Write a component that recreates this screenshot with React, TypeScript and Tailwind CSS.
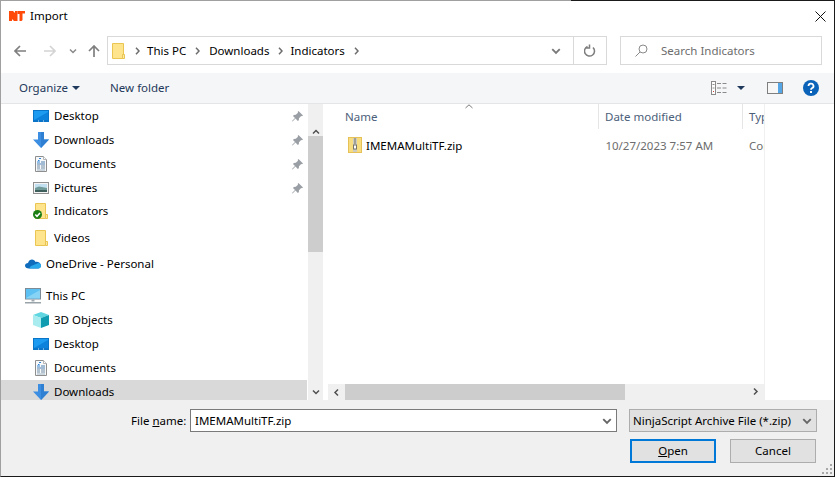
import type { ReactNode } from "react";

function Logo() {
  return (
    <svg width="16" height="10" viewBox="0 0 16 10" fill="#ff4a0a">
      <path d="M0 0h4l2 2V0h2.500v10H5L3 8v2H0z" />
      <path d="M8.500 0H16v2.500h-2.500V9l-1 1h-2V3H8.500z" />
    </svg>
  );
}

function Chevron({ color = "#7a7a7a", size = 8 }: { color?: string; size?: number }) {
  return (
    <svg width={size} height={size} viewBox="0 0 8 8" fill="none" stroke={color} strokeWidth="1.5">
      <path d="M1 2.500l3 3 3-3" />
    </svg>
  );
}

function Crumb() {
  return (
    <svg width="5" height="8" viewBox="0 0 5 8" fill="none" stroke="#6e6e6e" strokeWidth="1.500">
      <path d="M1 .8l3 3.200-3 3.200" />
    </svg>
  );
}

function Arrow({ color, flip }: { color: string; flip?: boolean }) {
  return (
    <svg width="12" height="12" viewBox="0 0 12 12" fill="none" stroke={color} strokeWidth="1.700" className={flip ? "rotate-180" : ""}>
      <path d="M12 6H1.500M6 1L1 6l5 5" />
    </svg>
  );
}

function FolderIcon({ check }: { check?: boolean }) {
  return (
    <svg width="16" height="16" viewBox="0 0 16 16">
      <path d="M2.500 0.500h10v15h-10z" fill="#fde48d" stroke="#eac552" />
      <path d="M12.500 11.500h2v4h-2z" fill="#fbe9a8" stroke="#eac552" />
      {check && (
        <g>
          <circle cx="4.500" cy="11.500" r="4.500" fill="#1b7f16" />
          <path d="M2.300 11.500l1.700 1.800 3-3.300" fill="none" stroke="#fff" strokeWidth="1.500" />
        </g>
      )}
    </svg>
  );
}

function DesktopIcon() {
  return (
    <svg width="16" height="16" viewBox="0 0 16 16">
      <rect x="0" y="2" width="16" height="12" fill="#0a74c8" />
      <rect x="1" y="3" width="14" height="9" fill="#1d9bf0" />
      <path d="M1 12L15 4v8z" fill="#0c82dc" />
      <path d="M5 13h1M10 13h1" stroke="#d5ecfb" />
    </svg>
  );
}

function DownloadIcon() {
  return (
    <svg width="16" height="16" viewBox="0 0 16 16">
      <path d="M5 0h6v7.500h5L8 16 0 7.500h5z" fill="#3b8ee2" />
      <path d="M8 0h3v7.500h5L8 16z" fill="#2f7fd3" />
    </svg>
  );
}

function DocumentIcon() {
  return (
    <svg width="16" height="16" viewBox="0 0 16 16">
      <path d="M2.500.5h8l3 3v12h-11z" fill="#f7f8f9" stroke="#8e8e8e" />
      <path d="M10.500.5v3h3" fill="#fff" stroke="#b5b5b5" />
      <path d="M6 2.500h2M5 4.500h1.500M4 6h3" stroke="#2f86d6" />
      <path d="M8 6h4M4 8h8" stroke="#4a7fae" />
      <path d="M4 10h3M8 10h4M4 12h3M8 12h4" stroke="#6f8ba3" />
      <path d="M4 14h8" stroke="#9fb2c2" />
    </svg>
  );
}

function PicturesIcon() {
  return (
    <svg width="16" height="16" viewBox="0 0 16 16">
      <rect x=".5" y="2.500" width="15" height="11" fill="#f4f4f4" stroke="#8f8f8f" />
      <rect x="2" y="4" width="12" height="4" fill="#c2dff0" />
      <path d="M2 8l4-1.500L14 8v4H2z" fill="#6f9a98" />
      <rect x="2" y="10" width="12" height="2" fill="#3f5f5c" />
    </svg>
  );
}

function CloudIcon() {
  return (
    <svg width="16" height="16" viewBox="0 0 16 16">
      <path d="M4 12.500C1.500 12.500 0 11.300 0 9.700 0 8 1.500 7 3 7c.5-2.500 2.500-3.500 4-3.500S10 4.500 10.500 6c2-.6 5.500.5 5.500 3.700 0 1.600-1.200 2.800-3 2.800z" fill="#0f6cbd" />
      <path d="M4 12.500h9c1.800 0 3-1.200 3-2.800 0-1.500-1-2.500-2.500-2.800L6 10z" fill="#28a8ea" />
    </svg>
  );
}

function MonitorIcon() {
  return (
    <svg width="16" height="16" viewBox="0 0 16 16">
      <rect x=".5" y="0.500" width="15" height="10.500" fill="#5cc0f2" stroke="#7d8b96" />
      <path d="M1 10L15 2v8.500H1z" fill="#86d3f6" />
      <rect x="6.500" y="11.500" width="3" height="2" fill="#a0a9b0" />
      <rect x="0" y="14" width="16" height="1.500" fill="#9aa3aa" />
    </svg>
  );
}

function CubeIcon() {
  return (
    <svg width="16" height="16" viewBox="0 0 16 16">
      <path d="M8 0l8 3-8 3-8-3z" fill="#5fd6e0" />
      <path d="M0 3l8 3v10L0 13z" fill="#a8ecef" />
      <path d="M16 3L8 6v10l8-3z" fill="#0f9bb0" />
    </svg>
  );
}

function Pin() {
  return (
    <svg width="11" height="11" viewBox="0 0 11 11" fill="#9a9fa5">
      <path d="M6.500 0L11 4.500l-1 .8-.8-.3L7 7.200l-.2 2L5.800 10 3.500 7.500 0.500 10.500 0 10l3-3L1 5l.8-1 2-.2L6 1.800l-.3-.8z" />
    </svg>
  );
}

function NavRow({ icon, label, pin, className, indent = "pl-8" }: { icon: ReactNode; label: string; pin?: boolean; className: string; indent?: string }) {
  return (
    <div className={`flex shrink-0 items-center pr-1 text-black ${indent} ${className}`}>
      <span className="mr-[5px] flex h-4 w-4 shrink-0">{icon}</span>
      <span className="flex-1">{label}</span>
      {pin && <Pin />}
    </div>
  );
}

function Sidebar() {
  return (
    <div className="flex w-[306px] shrink-0 flex-col overflow-hidden">
      <NavRow icon={<DesktopIcon />} label="Desktop" pin className="h-6" />
      <NavRow icon={<DownloadIcon />} label="Downloads" pin className="h-6" />
      <NavRow icon={<DocumentIcon />} label="Documents" pin className="h-6" />
      <NavRow icon={<PicturesIcon />} label="Pictures" pin className="h-6" />
      <NavRow icon={<FolderIcon check />} label="Indicators" className="h-[22px]" />
      <NavRow icon={<FolderIcon />} label="Videos" className="mt-1 h-6" />
      <NavRow icon={<CloudIcon />} label="OneDrive - Personal" indent="pl-6" className="mt-0.5 h-6" />
      <NavRow icon={<MonitorIcon />} label="This PC" indent="pl-6" className="mt-2 h-6" />
      <NavRow icon={<CubeIcon />} label="3D Objects" className="h-6" />
      <NavRow icon={<DesktopIcon />} label="Desktop" className="h-6" />
      <NavRow icon={<DocumentIcon />} label="Documents" className="h-6" />
      <NavRow icon={<DownloadIcon />} label="Downloads" className="h-6 bg-[#d9d9d9]" />
    </div>
  );
}

function VScroll() {
  return (
    <div className="ml-px flex w-[15px] shrink-0 flex-col bg-[#f0f0f0]">
      <div className="flex h-8 shrink-0 justify-center pt-2">
        <span className="rotate-180"><Chevron color="#505050" /></span>
      </div>
      <div className="h-[116px] bg-[#cdcdcd]" />
      <div className="flex flex-1 items-end justify-center pb-1">
        <Chevron color="#505050" />
      </div>
    </div>
  );
}

function HScroll() {
  return (
    <div className="ml-0.5 flex h-4 shrink-0 items-center bg-[#f0f0f0]">
      <span className="flex w-[17px] justify-center rotate-90"><Chevron color="#505050" /></span>
      <div className="h-4 w-[280px] bg-[#cdcdcd]" />
      <span className="ml-auto flex w-[17px] justify-center -rotate-90"><Chevron color="#505050" /></span>
    </div>
  );
}

function FileList() {
  return (
    <div className="ml-[3px] flex w-[439px] shrink-0 flex-col border-r border-[#f0f0f0]">
      <div className="flex h-[25px] shrink-0 text-[#4c607a]">
        <div className="relative flex w-[273px] items-center border-r border-[#e5e5e5] pl-[19px]">
          Name
          <svg width="8" height="5" viewBox="0 0 8 5" fill="none" stroke="#7a7a7a" className="absolute left-[139px] top-0">
            <path d="M.5 4L4 .8 7.500 4" />
          </svg>
        </div>
        <div className="flex w-[144px] items-center border-r border-[#e5e5e5] pl-1.5">Date modified</div>
        <div className="flex w-[21px] items-center overflow-hidden pl-1.5">Type</div>
      </div>
      <div className="mt-1 flex h-6 shrink-0 items-center">
        <span className="ml-[22px] mr-1 flex h-4 w-3.5">
          <svg width="14" height="16" viewBox="0 0 14 16">
            <rect x=".5" y=".5" width="13" height="15" fill="#f8dc80" stroke="#e5c158" />
            <rect x="5" y="1" width="4" height="14" fill="#cfcdbf" />
            <path d="M6 2h2M6 4h2M6 6h2" stroke="#77756c" />
            <rect x="5.500" y="8" width="3" height="4" fill="#fff" stroke="#77756c" />
          </svg>
        </span>
        <span className="w-[240px] pt-px text-black">IMEMAMultiTF.zip</span>
        <span className="w-[144px] pt-px text-[#6d6d6d]">10/27/2023 7:57 AM</span>
        <span className="w-[15px] overflow-hidden pt-px text-[#6d6d6d]">Compressed</span>
      </div>
      <div className="flex-1" />
      <HScroll />
    </div>
  );
}

function Grip() {
  return (
    <svg width="11" height="11" viewBox="0 0 11 11" fill="#a8a8a8" className="absolute bottom-px right-px">
      <rect x="8" y="0" width="2" height="2" />
      <rect x="4" y="4" width="2" height="2" />
      <rect x="8" y="4" width="2" height="2" />
      <rect x="0" y="8" width="2" height="2" />
      <rect x="4" y="8" width="2" height="2" />
      <rect x="8" y="8" width="2" height="2" />
    </svg>
  );
}

export default function App() {
  return (
    <div className="flex h-[477px] w-[835px] flex-col overflow-hidden border-b border-l border-r border-b-[#1a1a1a] border-l-[#a0a0a0] border-r-[#1a1a1a] bg-white font-['Noto_Sans','Open_Sans',sans-serif] text-[11.5px] leading-4">
      <div className="flex h-px shrink-0">
        <div className="w-[570px] bg-[#a0a0a0]" />
        <div className="flex-1 bg-[#1a1a1a]" />
      </div>

      <div className="flex h-[30px] shrink-0 items-center pl-2 text-black">
        <Logo />
        <span className="ml-[5px]">Import</span>
        <svg width="11" height="11" viewBox="0 0 11 11" fill="none" stroke="#111" className="ml-auto mr-2">
          <path d="M.5.5l10 10M10.500.5l-10 10" />
        </svg>
      </div>

      <div className="mt-[5px] flex h-[29px] shrink-0 items-center">
        <div className="ml-[13px]"><Arrow color="#7f7f7f" /></div>
        <div className="ml-[18px]"><Arrow color="#d4d4d4" flip /></div>
        <div className="ml-[13px]"><Chevron color="#8a8a8a" size={8} /></div>
        <div className="ml-[11px] rotate-90"><Arrow color="#7f7f7f" /></div>
        <div className="ml-[7px] flex h-[29px] w-[500px] items-center border border-[#d9d9d9]">
          <span className="ml-1 flex h-4 w-4">
            <svg width="13" height="16" viewBox="0 0 13 16">
              <path d="M.5.5h11v15H.5z" fill="#fde48d" stroke="#eac552" />
              <path d="M10.500 11.500h2v4h-2z" fill="#fbe9a8" stroke="#eac552" />
            </svg>
          </span>
          <span className="ml-[7px]"><Crumb /></span>
          <span className="ml-[7px] text-black">This PC</span>
          <span className="ml-[9px]"><Crumb /></span>
          <span className="ml-[9px] text-black">Downloads</span>
          <span className="ml-[9px]"><Crumb /></span>
          <span className="ml-[7px] text-black">Indicators</span>
          <span className="ml-[9px]"><Crumb /></span>
          <span className="ml-auto flex w-[34px] justify-center"><Chevron color="#7a7a7a" size={10} /></span>
          <div className="flex h-full w-[33px] items-center justify-center border-l border-[#d9d9d9]">
            <svg width="12" height="13" viewBox="0 0 12 13" fill="none" stroke="#7d7d7d" strokeWidth="1.500">
              <path d="M3.500 2.500A5 5 0 1 0 9 3.500M5.500 .5v3.500h-3.500" />
            </svg>
          </div>
        </div>
        <div className="ml-[13px] flex h-[29px] w-[202px] items-center border border-[#d9d9d9] pl-[14px] text-[#6d6d6d]">
          <svg width="13" height="13" viewBox="0 0 13 13" fill="none" stroke="#8a8a8a">
            <circle cx="8" cy="5" r="4" />
            <path d="M5 8l-4.500 4.500" />
          </svg>
          <span className="ml-[13px]">Search Indicators</span>
        </div>
      </div>

      <div className="mt-[8px] flex h-[31px] shrink-0 items-center border-b border-[#e5e5e5] bg-[#f5f6f7] pl-[18px] text-[#1e395b]">
        <span>Organize</span>
        <svg width="8" height="4" viewBox="0 0 8 4" fill="#1e395b" className="ml-1"><path d="M0 0h8L4 4z" /></svg>
        <span className="ml-[30px]">New folder</span>
        <svg width="16" height="14" viewBox="0 0 16 14" className="ml-auto" fill="none">
          <rect x=".5" y=".5" width="4" height="13" stroke="#8a8a8a" fill="#fff" />
          <path d="M1.500 3.500h2M1.500 7h2" stroke="#8a8a8a" />
          <rect x="2" y="10" width="1" height="1" fill="#d04040" />
          <path d="M6 2.500h4M11.500 2.500h4M6 7h4M11.500 7h4M6 11.500h4M11.500 11.500h4" stroke="#8a8a8a" />
        </svg>
        <svg width="8" height="4" viewBox="0 0 8 4" fill="#1e395b" className="ml-2.5"><path d="M0 0h8L4 4z" /></svg>
        <svg width="16" height="12" viewBox="0 0 16 12" fill="none" className="ml-[22px]">
          <rect x=".5" y=".5" width="15" height="11" stroke="#7f7f7f" fill="#f7f7f7" />
          <rect x="11" y="1" width="4" height="10" fill="#55a6e6" />
        </svg>
        <svg width="16" height="16" viewBox="0 0 16 16" className="ml-5 mr-[15px]">
          <circle cx="8" cy="8" r="8" fill="#0a63b8" />
          <path d="M5.500 6a2.500 2.300 0 1 1 3.700 2c-.9.500-1.200 1-1.200 1.800" fill="none" stroke="#fff" strokeWidth="1.800" />
          <rect x="7" y="11" width="2" height="2" fill="#fff" />
        </svg>
      </div>

      <div className="flex h-[296px] shrink-0">
        <Sidebar />
        <VScroll />
        <FileList />
      </div>

      <div className="relative flex-1 bg-[#f0f0f0] text-black">
        <div className="mt-[9px] flex items-center">
          <span className="ml-[130px] w-[59px]">
            File <span className="underline">n</span>ame:
          </span>
          <div className="flex h-[23px] w-[427px] items-center border border-[#7a7a7a] bg-white pl-1">
            IMEMAMultiTF.zip
            <span className="ml-auto mr-1"><Chevron color="#666" size={10} /></span>
          </div>
          <div className="ml-3 flex h-[23px] w-[188px] items-center border border-[#adadad] bg-[#e1e1e1] pl-[3px]">
            NinjaScript Archive File (*.zip)
            <span className="ml-auto mr-1"><Chevron color="#666" size={10} /></span>
          </div>
        </div>
        <div className="mt-[7px] flex">
          <button className="ml-[629px] flex h-6 w-[86px] items-center justify-center border-2 border-[#0078d7] bg-[#e1e1e1]">
            <span><span className="underline">O</span>pen</span>
          </button>
          <button className="ml-[14px] flex h-6 w-[86px] items-center justify-center border border-[#adadad] bg-[#e1e1e1]">
            Cancel
          </button>
        </div>
        <Grip />
      </div>
    </div>
  );
}
